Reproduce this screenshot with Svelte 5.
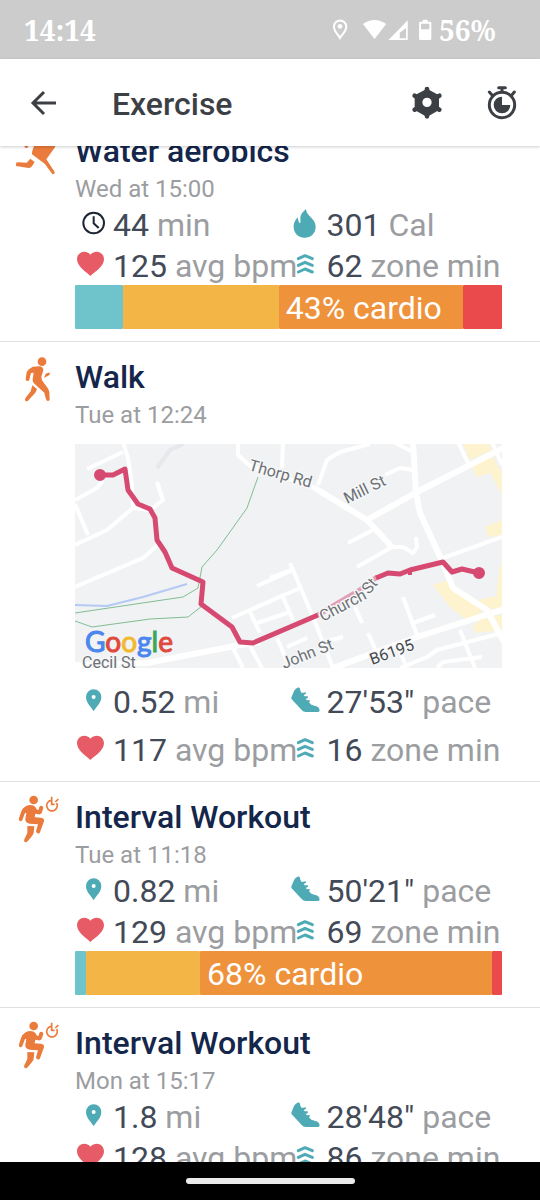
<script>
  import { onMount } from 'svelte';

  let list; // scroll viewport for the exercise log

  const exercises = [
    {
      kind: 'run',
      name: 'Water aerobics',
      when: 'Wed at 15:00',
      stats: [
        { icon: 'clock', value: '44', unit: 'min' },
        { icon: 'flame', value: '301', unit: 'Cal' },
        { icon: 'heart', value: '125', unit: 'avg bpm' },
        { icon: 'zone', value: '62', unit: 'zone min' },
      ],
      zones: [
        { zone: 'light', share: 11.3 },
        { zone: 'fat-burn', share: 36.4 },
        { zone: 'cardio', share: 43.2, label: '43% cardio' },
        { zone: 'peak', share: 9.1 },
      ],
    },
    {
      kind: 'walk',
      name: 'Walk',
      when: 'Tue at 12:24',
      map: true,
      stats: [
        { icon: 'pin', value: '0.52', unit: 'mi' },
        { icon: 'shoe', value: '27\'53"', unit: 'pace' },
        { icon: 'heart', value: '117', unit: 'avg bpm' },
        { icon: 'zone', value: '16', unit: 'zone min' },
      ],
    },
    {
      kind: 'interval',
      name: 'Interval Workout',
      when: 'Tue at 11:18',
      stats: [
        { icon: 'pin', value: '0.82', unit: 'mi' },
        { icon: 'shoe', value: '50\'21"', unit: 'pace' },
        { icon: 'heart', value: '129', unit: 'avg bpm' },
        { icon: 'zone', value: '69', unit: 'zone min' },
      ],
      zones: [
        { zone: 'light', share: 2.5 },
        { zone: 'fat-burn', share: 26.8 },
        { zone: 'cardio', share: 68.3, label: '68% cardio' },
        { zone: 'peak', share: 2.4 },
      ],
    },
    {
      kind: 'interval',
      name: 'Interval Workout',
      when: 'Mon at 15:17',
      stats: [
        { icon: 'pin', value: '1.8', unit: 'mi' },
        { icon: 'shoe', value: '28\'48"', unit: 'pace' },
        { icon: 'heart', value: '128', unit: 'avg bpm' },
        { icon: 'zone', value: '86', unit: 'zone min' },
      ],
    },
  ];

  // Minor streets of the map, as polyline points
  const streets = [
    '12,25 48,8',
    '48,-2 53,14 57,41 58,64',
    '82,38 88,56 78,64',
    '0,56 22,44 28,36',
    '0,60 13,91',
    '0,101 32,86 58,64 75,66',
    '0,143 68,114 83,101 90,106',
    '163,-2 163,11 175,22 238,43',
    '208,-2 207,24',
    '243,41 252,16 265,8 295,0',
    '310,31 325,24 338,26',
    '318,-2 338,8',
    '317,103 328,103 338,109 342,103 341,93',
    '317,103 282,123',
    '298,86 273,99',
    '383,-2 393,19',
    '417,-2 427,21',
    '368,114 427,93',
    '328,153 342,191',
    '338,179 360,171',
    '325,224 352,213 362,206 427,189',
    '385,186 400,224',
    '362,224 368,218 407,213',
    '215,119 238,173 258,224',
    '195,134 217,126',
    '182,142 218,126',
    '157,174 225,144',
    '175,168 185,189',
    '208,153 218,176',
    '182,179 215,168',
    '280,163 287,179',
    '293,189 302,209',
    '202,194 215,224',
    '212,203 232,194',
    '248,198 268,193',
    '323,203 332,224',
    '158,204 168,224',
    '175,202 187,224',
  ];

  onMount(() => {
    list.scrollTop = 30;
  });
</script>

{#snippet activityIcon(kind)}
  {#if kind === 'run'}
    <svg class="activity" viewBox="0 -72 225 225" aria-hidden="true">
      <circle cx="136" cy="-38" r="13" />
      <path d="M98 -20L130 -16L140 4L155 8Q167 14 165 22L139 58L164 96Q165 104 157 102L134 71L96 43Q95 36 101 20L112 -6L92 -8L78 14L70 10L86 -16Z" />
      <path d="M91 56L104 66L96 79Q93 84 86 84L53 79Q46 78 48 71Q49 66 56 67L80 68Z" />
      <circle cx="79" cy="18" r="6" />
    </svg>
  {:else if kind === 'walk'}
    <svg class="activity" viewBox="0 -9 225 225" aria-hidden="true">
      <circle cx="126" cy="50" r="13" />
      <path d="M98 65L119 64Q130 66 130 76L124 95L126 106L143 129Q147 135 148 142L149 163Q149 168 144 168Q139 168 138 163L133 143L101 114Q97 109 98 102L101 83L93 84L88 104Q86 109 81 108Q76 107 77 101L80 82Q82 77 87 73Z" />
      <path d="M97 121L111 132L106 143L84 167Q80 170 76 167Q73 164 77 158L92 139Z" />
      <path d="M132 98L137 87Q145 81 150 84Q151 88 145 92Z" />
    </svg>
  {:else}
    <svg class="activity" viewBox="0 6 225 225" aria-hidden="true">
      <circle cx="101" cy="60" r="13" />
      <path d="M75 80Q80 75 90 75Q102 75 106 81L111 89L116 89L118 81Q121 76 126 78Q131 80 130 84L125 99Q122 104 115 103L106 101L104 112L123 113Q134 115 132 124L120 157Q118 162 113 160Q108 159 108 154L114 133L89 131Q75 128 76 117L79 99L75 99L67 120Q64 125 59 123Q56 121 57 115L64 94Q67 85 75 80Z" />
      <path d="M82 138L103 139L101 158Q100 163 96 168L83 184Q78 188 74 186Q71 183 73 178L82 159Z" />
      <g class="outline">
        <path d="M153 61A16 16 0 1 0 170 69" />
        <path d="M155 50V73H164" />
        <path d="M166 66L175 57" />
      </g>
    </svg>
  {/if}
{/snippet}

{#snippet statIcon(icon)}
  {#if icon === 'clock'}
    <svg class="stat-icon dark" viewBox="225 198 108 114" aria-hidden="true">
      <circle cx="281" cy="249" r="31" />
      <path d="M281 229V250L296 264" />
    </svg>
  {:else if icon === 'flame'}
    <svg class="stat-icon teal" viewBox="56 198 108 114" aria-hidden="true">
      <path d="M107 207C107 228 136 235 136 260C136 279 122 293 103 293C84 293 70 279 70 260C70 245 78 238 82 232C83 238 84 245 88 250C92 248 90 243 90 236C90 222 99 215 107 207Z" />
    </svg>
  {:else if icon === 'heart'}
    <svg class="stat-icon red" viewBox="225 399 108 114" aria-hidden="true">
      <path d="M271 486C258 474 231 457 231 436C231 422 241 413 253 413C261 413 268 417 271 422C275 417 282 413 290 413C302 413 312 422 312 436C312 457 285 474 271 486Z" />
    </svg>
  {:else if icon === 'pin'}
    <svg class="stat-icon teal" viewBox="225 276 108 114" aria-hidden="true">
      <path fill-rule="evenodd" d="M281 361C275 348 258 337 258 318A23 23 0 0 1 304 318C304 337 287 348 281 361ZM281 312A6 6 0 1 0 281 324A6 6 0 1 0 281 312Z" />
    </svg>
  {:else if icon === 'shoe'}
    <svg class="stat-icon teal" viewBox="55 39 108 114" aria-hidden="true">
      <path d="M84 52Q89 54 89 62L93 69L105 67Q108 70 104 73L99 75L102 79L111 79Q114 82 110 85L105 87L109 91L117 90Q119 94 115 97L122 104L141 110Q147 114 147 122Q146 126 140 126H105Q98 126 93 120L63 88Q60 84 64 78L70 63Q74 55 84 52Z" />
    </svg>
  {:else}
    <svg class="stat-icon chevrons" viewBox="56 321 108 114" aria-hidden="true">
      <path d="M84 356L104 347L126 356M84 376L104 367L126 376M84 396L104 387L126 396" />
    </svg>
  {/if}
{/snippet}

{#snippet routeMap()}
  <svg class="map" viewBox="0 0 427 224" role="img" aria-label="Route map">
    <rect class="land" width="427" height="224" />
    <g class="shops">
      <path d="M388 0H413L417 6L395 16Z" />
      <path d="M397 23L417 11L427 29V51L415 29L402 33Z" />
      <path d="M410 83L427 76V91L413 93Z" />
      <path d="M358 141L372 136L377 146L408 166L395 179L375 163Z" />
      <path d="M425 121H427V163L412 166L403 156L421 152Z" />
      <path d="M397 183L408 173L427 171V186L402 189Z" />
    </g>
    <polyline class="lane" points="82,24 95,6 108,0" />
    <g class="streets">
      {#each streets as points}
        <polyline {points} />
      {/each}
    </g>
    <g class="roads">
      <polyline points="238,43 292,76 317,103" />
      <polyline points="338,-2 341,49 345,69 368,119 378,144 412,166 430,200" />
      <polyline points="292,76 342,48 430,3" />
      <polyline points="258,224 342,193 430,165" />
      <polyline points="0,221 72,219 165,201 185,198" />
    </g>
    <polyline class="river" points="0,161 32,162 68,153 112,140" />
    <g class="paths">
      <polyline points="0,169 108,153 123,144 127,123 142,106 172,64 183,33" />
      <polyline points="0,177 17,183 75,175 113,173 127,162" />
    </g>
    <g class="route">
      <polyline points="25,31 38,31 50,25 53,46 63,60 75,65 80,74 82,96 90,108 97,124 128,138 126,160 157,183 165,198 178,199 243,171" />
      <polyline class="faded" points="243,171 285,146 302,133" />
      <polyline points="301,134 313,129 325,130 335,126 368,118 377,128 387,125 404,129" />
      <path d="M335 126V131" />
      <circle cx="25" cy="31" r="4" />
      <circle cx="404" cy="129" r="4" />
    </g>
    <g class="labels">
      <text transform="translate(173 26) rotate(16)">Thorp Rd</text>
      <text transform="translate(272 60) rotate(-26)">Mill St</text>
      <text transform="translate(248 178) rotate(-28)">Church</text>
      <text transform="translate(294 151) rotate(-50)">St</text>
      <text transform="translate(209 225) rotate(-22)">John St</text>
      <text x="7" y="224">Cecil St</text>
      <text class="route-number" transform="translate(297 221) rotate(-20)">B6195</text>
    </g>
    <text class="google" x="10" y="208"><tspan class="g-blue">G</tspan><tspan class="g-red">o</tspan><tspan class="g-yellow">o</tspan><tspan class="g-blue">g</tspan><tspan class="g-green">l</tspan><tspan class="g-red">e</tspan></text>
  </svg>
{/snippet}

<div class="screen">
  <div class="status">
    <span class="time">14:14</span>
    <svg class="status-icons" viewBox="180 51 310 75" aria-hidden="true">
      <path class="line" d="M210 114C205 104 192 94 192 80A18 18 0 0 1 229 80C229 94 216 104 210 114Z" />
      <circle cx="210" cy="79" r="7" />
      <path d="M279 72Q314 48 349 72L314 117Z" />
      <path fill-rule="evenodd" d="M414 61V120H356ZM409 84L390 98V115H409Z" />
      <path fill-rule="evenodd" d="M459 59H474V65H481Q485 65 485 69V116Q485 120 481 120H452Q448 120 448 116V69Q448 65 452 65H459ZM454 71V88H479V71Z" />
    </svg>
    <span>56%</span>
  </div>

  <header>
    <button aria-label="Back">
      <svg viewBox="0 0 48 48" aria-hidden="true">
        <path class="arrow" d="M36 24H13M24 13L13 24L24 35" />
      </svg>
    </button>
    <h1>Exercise</h1>
    <button aria-label="Settings">
      <svg viewBox="400 236 144 144" aria-hidden="true">
        <path class="teeth" d="M472 266V274M472 340V348M435 286L442 290M502 324L509 328M435 328L442 324M502 290L509 286" />
        <path fill-rule="evenodd" d="M472 265L508 285V329L472 350L435 329V285ZM472 292A14 14 0 1 0 472 320A14 14 0 1 0 472 292Z" />
      </svg>
    </button>
    <button aria-label="Timer">
      <svg viewBox="625 236 144 144" aria-hidden="true">
        <circle class="ring" cx="697" cy="314" r="38" />
        <path d="M697 289V314H722A25 25 0 1 1 697 289Z" />
        <path class="ring" d="M687 262H707M697 264V274M659 275L669 286M734 275L725 286" />
      </svg>
    </button>
  </header>

  <main bind:this={list}>
    {#each exercises as exercise}
      <article>
        {@render activityIcon(exercise.kind)}
        <div class="details">
          <h2>{exercise.name}</h2>
          <p class="when">{exercise.when}</p>
          {#if exercise.map}
            {@render routeMap()}
          {/if}
          <div class="stats" class:spaced={exercise.map}>
            {#each exercise.stats as stat}
              <div class="stat">
                {@render statIcon(stat.icon)}
                <span>{stat.value} <span class="unit">{stat.unit}</span></span>
              </div>
            {/each}
          </div>
          {#if exercise.zones}
            <div class="bar">
              {#each exercise.zones as part}
                <div class="zone {part.zone}" style="width: {part.share}%">{part.label ?? ''}</div>
              {/each}
            </div>
          {/if}
        </div>
      </article>
    {/each}
  </main>

  <div class="nav"><div class="handle"></div></div>
</div>

<style>
  :global(body) {
    background: #fff;
  }

  .screen {
    display: flex;
    flex-direction: column;
    height: 100vh;
    font-family: Roboto, 'Liberation Sans', sans-serif;
    color: #434a57;
  }

  .status {
    flex: none;
    display: flex;
    align-items: center;
    box-sizing: border-box;
    height: 59px;
    padding: 0 44px 0 24px;
    background: #ccc;
    color: #fff;
    font: bold 28px 'Noto Serif', 'Liberation Serif', serif;
  }

  .time {
    flex: 1;
  }

  .status-icons {
    width: 103px;
    height: 25px;
    margin-right: 6px;
    fill: #fff;
  }

  .status-icons .line {
    fill: none;
    stroke: #fff;
    stroke-width: 6;
  }

  header {
    position: relative;
    z-index: 1;
    flex: none;
    display: flex;
    align-items: center;
    box-sizing: border-box;
    height: 87px;
    padding: 0 14px 0 20px;
    background: #fff;
    box-shadow: 0 1px 3px rgba(0, 0, 0, 0.2);
  }

  header button {
    width: 48px;
    height: 48px;
    padding: 0;
    border: 0;
    background: none;
  }

  header button + button {
    margin-left: 27px;
  }

  header svg {
    display: block;
    width: 48px;
    height: 48px;
    fill: #3c4045;
  }

  header .arrow {
    fill: none;
    stroke: #3c4045;
    stroke-width: 3;
  }

  .teeth {
    stroke: #3c4045;
    stroke-width: 14;
    stroke-linecap: round;
  }

  .ring {
    fill: none;
    stroke: #3c4045;
    stroke-width: 9;
    stroke-linecap: round;
  }

  h1 {
    flex: 1;
    margin: 2px 0 0 44px;
    font-size: 32px;
    font-weight: 500;
    color: #3c4045;
  }

  main {
    flex: 1;
    min-height: 0;
    overflow-y: auto;
    scrollbar-width: none;
  }

  article {
    display: grid;
    grid-template-columns: 75px minmax(0, 1fr);
    padding-right: 38px;
    border-bottom: 1px solid #e0e0e0;
  }

  .activity {
    width: 75px;
    height: 75px;
    fill: #ea7b3c;
  }

  .activity .outline {
    fill: none;
    stroke: #ea7b3c;
    stroke-width: 5;
  }

  .details {
    padding: 14px 0 12px;
  }

  h2 {
    margin: 0;
    font-size: 32px;
    font-weight: 500;
    line-height: 42px;
    color: #15264b;
  }

  .when {
    margin: 0;
    font-size: 24px;
    line-height: 34px;
    color: #9b9da1;
  }

  .stats {
    display: grid;
    grid-template-columns: repeat(2, minmax(0, 1fr));
    row-gap: 3px;
    font-size: 32px;
    line-height: 38px;
    white-space: nowrap;
  }

  .stats.spaced {
    row-gap: 10px;
    margin-top: 15px;
  }

  .stat {
    display: flex;
    gap: 2px;
  }

  .unit {
    color: #9b9da1;
  }

  .stat-icon {
    flex: none;
    width: 36px;
    height: 38px;
  }

  .teal {
    fill: #4eabb6;
  }

  .red {
    fill: #e65b65;
  }

  .dark {
    fill: none;
    stroke: #1c2533;
    stroke-width: 6;
  }

  .chevrons {
    fill: none;
    stroke: #4eabb6;
    stroke-width: 9;
    stroke-linecap: round;
    stroke-linejoin: round;
  }

  .bar {
    display: flex;
    height: 44px;
    font-size: 32px;
    line-height: 46px;
    color: #fff;
    white-space: nowrap;
  }

  .zone {
    box-sizing: border-box;
    border-radius: 1px;
  }

  .light {
    background: #6fc4cb;
  }

  .fat-burn {
    background: #f4b547;
  }

  .cardio {
    padding-left: 7px;
    background: #ef923c;
  }

  .peak {
    background: #eb4a4d;
  }

  .map {
    display: block;
    width: 100%;
    margin-top: 12px;
  }

  .land {
    fill: #f0f2f4;
  }

  .shops {
    fill: #fdf3cf;
  }

  .map polyline {
    fill: none;
    stroke-linejoin: round;
  }

  .lane {
    stroke: #e6e8eb;
    stroke-width: 4;
  }

  .streets {
    stroke: #fff;
    stroke-width: 4;
  }

  .roads {
    stroke: #fff;
    stroke-width: 6;
  }

  .river {
    stroke: #b5c9f5;
    stroke-width: 2;
  }

  .paths {
    stroke: #82bd92;
    stroke-width: 1;
  }

  .route {
    fill: #d64a72;
    stroke: #d64a72;
    stroke-width: 4;
  }

  .route polyline {
    stroke-width: 5;
  }

  .route .faded {
    stroke-opacity: 0.5;
  }

  .labels {
    font-size: 16px;
    fill: #6d7175;
    stroke: #f6f7f8;
    stroke-width: 3;
    stroke-linejoin: round;
    paint-order: stroke;
  }

  .route-number {
    fill: #45494d;
  }

  .google {
    font: 400 28px Lato, sans-serif;
    stroke-width: 1;
  }

  .g-blue {
    fill: #4a86ee;
    stroke: #4a86ee;
  }

  .g-red {
    fill: #df4a3c;
    stroke: #df4a3c;
  }

  .g-yellow {
    fill: #f2b92f;
    stroke: #f2b92f;
  }

  .g-green {
    fill: #3da757;
    stroke: #3da757;
  }

  .nav {
    flex: none;
    display: flex;
    align-items: center;
    justify-content: center;
    height: 38px;
    background: #000;
  }

  .handle {
    width: 169px;
    height: 6px;
    border-radius: 3px;
    background: #ebebeb;
  }
</style>
